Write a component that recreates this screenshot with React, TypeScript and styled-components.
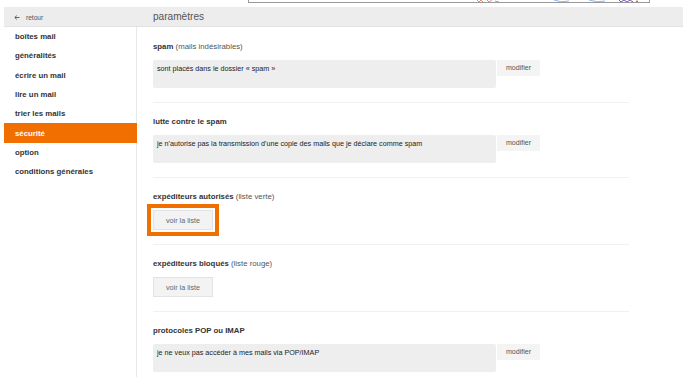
import React from "react";
import styled, { createGlobalStyle } from "styled-components";

const Global = createGlobalStyle`
  html, body { margin: 0; padding: 0; background: #fff; }
  body { font-family: "Liberation Sans", Arial, Helvetica, sans-serif; color: #333; }
  * { box-sizing: border-box; }
`;

const Page = styled.div`
  width: 688px;
  height: 377px;
  overflow: hidden;
  padding: 0 5px 0 4px;
`;

const TopStrip = styled.div`
  margin-left: 244px;
  width: 402px;
  height: 3px;
  border: 1px solid #9a9a9a;
  border-top: none;
  position: relative;
  overflow: hidden;
  & > svg { display: block; }
`;

const Frame = styled.div`
  margin-top: 4px;
`;

const Header = styled.div`
  display: flex;
  align-items: center;
  height: 20px;
  background: #ededed;
  border-bottom: 1px solid #e2e2e2;
`;

const BackLink = styled.div`
  width: 133px;
  display: flex;
  align-items: center;
  gap: 6px;
  padding-left: 10px;
  font-size: 6.6px;
  color: #555;
  padding-top: 1px;
`;

const Title = styled.div`
  padding-left: 16px;
  font-size: 10.1px;
  color: #555;
  padding-bottom: 1px;
`;

const Body = styled.div`
  display: flex;
  height: 360px;
`;

const Sidebar = styled.nav`
  width: 133px;
  flex: none;
  border-right: 1px solid #e8e8e8;
`;

const NavItem = styled.div<{ $active?: boolean }>`
  height: 19.3px;
  display: flex;
  align-items: center;
  padding-left: 11px;
  font-size: 7.8px;
  font-weight: bold;
  color: ${(p) => (p.$active ? "#fff" : "#333")};
  background: ${(p) => (p.$active ? "#f16e00" : "transparent")};
  margin-right: ${(p) => (p.$active ? "-1px" : "0")};
`;

const Main = styled.main`
  padding-left: 16px;
  width: 492px;
`;

const Section = styled.section<{ $first?: boolean; $last?: boolean }>`
  padding: ${(p) => (p.$first ? "14px" : "13px")} 0 14px;
  border-bottom: ${(p) => (p.$last ? "none" : "1px solid #f1f1f1")};
`;

const Label = styled.div`
  font-size: 7.8px;
  line-height: 12px;
  margin-bottom: 7px;
  color: #333;
  font-weight: bold;
  & > span { font-weight: normal; color: #555; }
`;

const Row = styled.div`
  display: flex;
  align-items: flex-start;
  gap: 1px;
`;

const ValueBox = styled.div`
  width: 343px;
  height: 28px;
  background: #eeeeee;
  border-radius: 2px;
  padding: 4px 4px 0;
  font-size: 7.2px;
  line-height: 10px;
  color: #222;
`;

const EditButton = styled.div`
  width: 43px;
  height: 16px;
  background: #f4f4f4;
  display: flex;
  align-items: center;
  justify-content: center;
  font-size: 7.1px;
  color: #555;
`;

const ListButton = styled.div<{ $highlight?: boolean }>`
  width: 60px;
  height: 20px;
  background: #f3f3f3;
  border: 1px solid #e3e3e3;
  display: flex;
  align-items: center;
  justify-content: center;
  font-size: 7.2px;
  color: #666;
  outline: ${(p) => (p.$highlight ? "4px solid #f16e00" : "none")};
  outline-offset: 2px;
`;

const sections = [
  { title: "spam", note: "(mails indésirables)", value: "sont placés dans le dossier « spam »" },
  { title: "lutte contre le spam", value: "je n'autorise pas la transmission d'une copie des mails que je déclare comme spam" },
  { title: "expéditeurs autorisés", note: "(liste verte)", list: true, highlight: true },
  { title: "expéditeurs bloqués", note: "(liste rouge)", list: true },
  { title: "protocoles POP ou IMAP", value: "je ne veux pas accéder à mes mails via POP/IMAP" },
];

const nav = [
  "boîtes mail",
  "généralités",
  "écrire un mail",
  "lire un mail",
  "trier les mails",
  "sécurité",
  "option",
  "conditions générales",
];

export default function App() {
  return (
    <Page>
      <Global />
      <TopStrip>
        <svg width="402" height="3" viewBox="0 0 402 3">
          <path d="M228 0 L230 2 L232 0 L234 2 M238 0 L240 2 L243 0 M246 1 L250 2" stroke="#f06a4a" strokeWidth="0.8" fill="none" />
          <path d="M305 0 Q312 3 320 1" stroke="#6fa6e8" strokeWidth="0.8" fill="none" />
          <path d="M340 0 Q348 3 356 1" stroke="#6fa6e8" strokeWidth="0.8" fill="none" />
          <path d="M370 0 L372 2 L375 0 L378 2 L381 0 L384 2" stroke="#6a3bb0" strokeWidth="0.9" fill="none" />
          <circle cx="388" cy="1.5" r="1" fill="#e8503a" />
        </svg>
      </TopStrip>
      <Frame>
        <Header>
          <BackLink>
            <svg width="6" height="5" viewBox="0 0 6 5">
              <path d="M5.5 2.5 H1 M2.8 0.6 L0.8 2.5 L2.8 4.4" stroke="#555" strokeWidth="0.9" fill="none" />
            </svg>
            retour
          </BackLink>
          <Title>paramètres</Title>
        </Header>
        <Body>
          <Sidebar>
            {nav.map((n) => (
              <NavItem key={n} $active={n === "sécurité"}>
                {n}
              </NavItem>
            ))}
          </Sidebar>
          <Main>
            {sections.map((s, i) => (
              <Section key={s.title} $first={i === 0} $last={i === sections.length - 1}>
                <Label>
                  {s.title}
                  {s.note ? <span> {s.note}</span> : null}
                </Label>
                {s.list ? (
                  <ListButton $highlight={s.highlight}>voir la liste</ListButton>
                ) : (
                  <Row>
                    <ValueBox>{s.value}</ValueBox>
                    <EditButton>modifier</EditButton>
                  </Row>
                )}
              </Section>
            ))}
          </Main>
        </Body>
      </Frame>
    </Page>
  );
}
